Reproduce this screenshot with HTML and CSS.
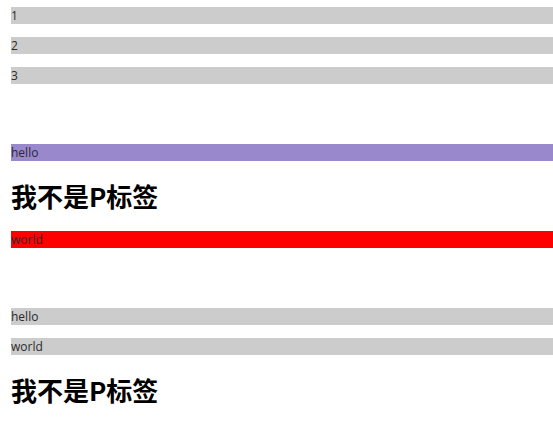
FILE: index.html
```html
<!DOCTYPE html>
<html>
<head>
<meta charset="utf-8">
<link rel="stylesheet" href="styles.css">
</head>
<body>
<div class="page">
  <div class="group">
    <div class="bar">1</div>
    <div class="bar">2</div>
    <div class="bar">3</div>
  </div>
  <div class="section">
    <div class="bar purple">hello</div>
    <h2 class="title">我不是P标签</h2>
    <div class="bar red">world</div>
  </div>
  <div class="section">
    <div class="bar">hello</div>
    <div class="bar">world</div>
    <h2 class="title">我不是P标签</h2>
  </div>
</div>
</body>
</html>
```
FILE: styles.css
```css
html, body {
  margin: 0;
  padding: 0;
  background: #fff;
}
.page {
  padding: 7px 0 0 11px;
  font-family: "Open Sans", "Noto Sans CJK SC", sans-serif;
  font-size: 12px;
  color: #2a2a2a;
}
.group, .section {
  display: flex;
  flex-direction: column;
  gap: 13px;
}
.section {
  margin-top: 60px;
}
.bar {
  height: 17px;
  line-height: 17px;
  background: #cccccc;
  white-space: nowrap;
}
.bar.purple {
  background: #9988cc;
}
.bar.red {
  background: #ff0000;
}
.title {
  margin: 4px 0;
  font-family: "Noto Sans CJK SC", sans-serif;
  font-weight: 700;
  font-size: 26px;
  line-height: 36px;
  color: #000;
}
```
